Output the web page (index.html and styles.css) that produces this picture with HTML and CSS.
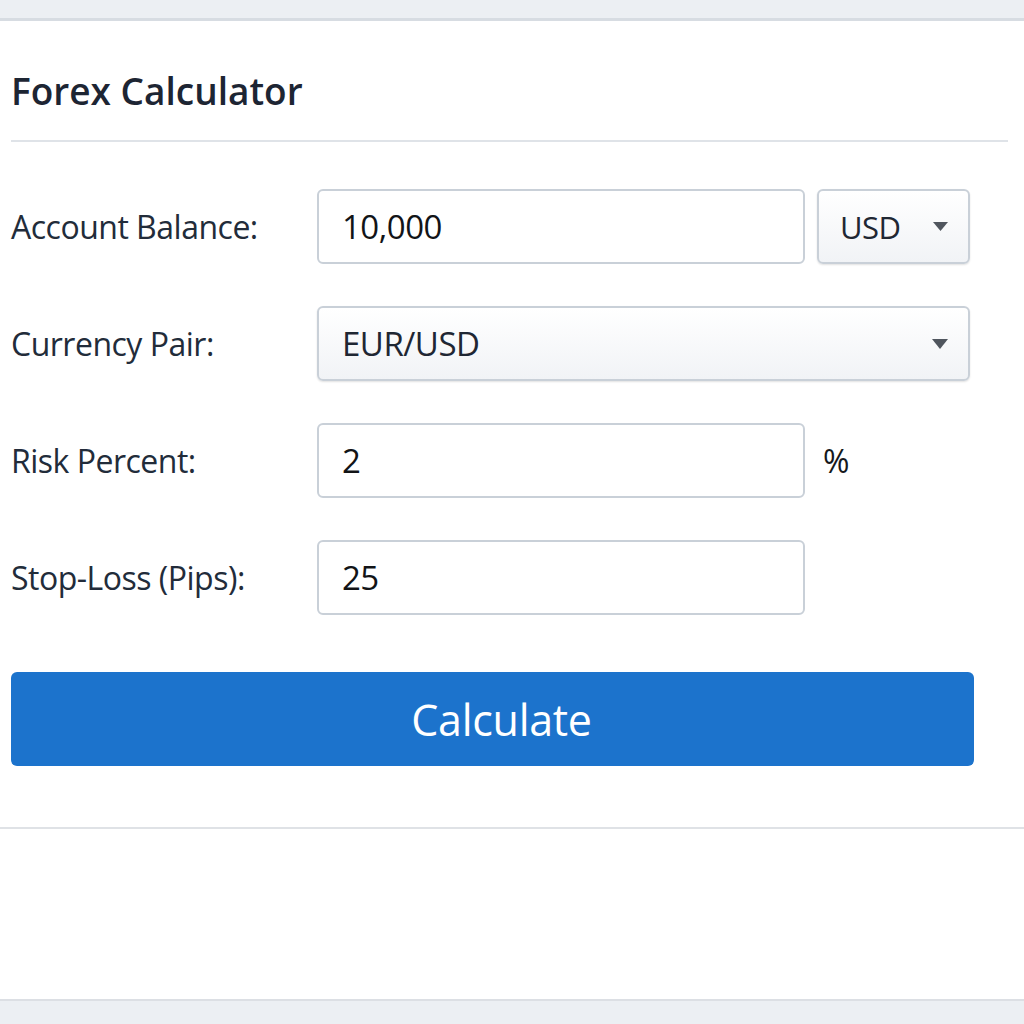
FILE: index.html
```html
<!DOCTYPE html>
<html lang="en">
<head>
  <meta charset="UTF-8" />
  <title>Forex Calculator</title>
  <link rel="stylesheet" href="styles.css">
</head>
<body>
  <div class="card">
    <div class="card-header">
      <h1>Forex Calculator</h1>
    </div>

    <form class="calc" onsubmit="return false">
      <div class="row">
        <label for="balance">Account Balance:</label>
        <input type="text" id="balance" value="10,000">
        <div class="select small">
          <select id="currency">
            <option>USD</option>
            <option>EUR</option>
            <option>GBP</option>
          </select>
          <svg class="arrow" width="15" height="9" viewBox="0 0 15 9"><path d="M0 0h15L7.5 9z" /></svg>
        </div>
      </div>

      <div class="row">
        <label for="pair">Currency Pair:</label>
        <div class="select wide">
          <select id="pair">
            <option>EUR/USD</option>
            <option>GBP/USD</option>
            <option>USD/JPY</option>
          </select>
          <svg class="arrow" width="16" height="10" viewBox="0 0 16 10"><path d="M0 0h16L8 10z" /></svg>
        </div>
      </div>

      <div class="row">
        <label for="risk">Risk Percent:</label>
        <input type="text" id="risk" value="2">
        <span class="unit">%</span>
      </div>

      <div class="row">
        <label for="stop">Stop-Loss (Pips):</label>
        <input type="text" id="stop" value="25">
      </div>

      <button type="submit">Calculate</button>
    </form>

    <div class="card-footer"></div>
  </div>
</body>
</html>
```

FILE: styles.css
```css
body {
  margin: 0;
  background: #eceff3;
  font-family: "Open Sans", Arial, sans-serif;
  color: #1f2a38;
}
.card {
  margin-top: 18px;
  height: 983px;
  background: #fff;
  border-top: 3px solid #d7dce2;
  border-bottom: 2px solid #dcdfe4;
  box-sizing: border-box;
  display: flex;
  flex-direction: column;
}
.card-header {
  margin: 0 16px 0 11px;
  padding-top: 48px;
  padding-bottom: 27px;
  border-bottom: 2px solid #dfe3e8;
}
h1 {
  margin: 0;
  font-size: 37px;
  line-height: 44px;
  font-weight: 600;
  color: #1d2533;
}
.calc {
  padding: 47px 0 61px 11px;
  display: flex;
  flex-direction: column;
  gap: 42px;
}
.row {
  display: grid;
  grid-template-columns: 294px 488px 153px;
  column-gap: 12px;
  align-items: center;
  height: 75px;
}
label {
  font-size: 32px;
  letter-spacing: -0.5px;
  color: #222c3a;
}
input[type="text"] {
  height: 75px;
  box-sizing: border-box;
  border: 2px solid #c9d0d8;
  border-radius: 6px;
  padding: 0 23px;
  font-family: "Open Sans", Arial, sans-serif;
  font-size: 33px;
  letter-spacing: -0.5px;
  color: #121417;
  background: #fff;
  outline: none;
}
.select {
  position: relative;
  height: 75px;
}
.select.wide {
  grid-column: 2 / 4;
}
.select select {
  appearance: none;
  width: 100%;
  height: 75px;
  box-sizing: border-box;
  border: 2px solid #c9d0d8;
  border-radius: 6px;
  background: linear-gradient(#ffffff, #f1f3f6);
  box-shadow: 0 1px 2px rgba(0, 0, 0, 0.12);
  font-family: "Open Sans", Arial, sans-serif;
  color: #1f2733;
  outline: none;
}
.select.small select {
  padding-left: 21px;
  font-size: 31px;
  letter-spacing: -0.5px;
}
.select.wide select {
  padding-left: 23px;
  font-size: 33px;
  font-weight: 500;
  letter-spacing: -0.5px;
}
.arrow {
  position: absolute;
  right: 22px;
  top: 33px;
  fill: #50565e;
  pointer-events: none;
}
.unit {
  padding-left: 6px;
  font-size: 32px;
  color: #15181c;
}
button {
  margin-top: 15px;
  width: 963px;
  height: 94px;
  padding-left: 24px;
  border: none;
  border-radius: 6px;
  background: #1c73cc;
  color: #fff;
  font-family: "Open Sans", Arial, sans-serif;
  font-size: 43px;
  font-weight: 500;
  letter-spacing: -0.3px;
  cursor: pointer;
}
.card-footer {
  flex: 1;
  border-top: 2px solid #dfe2e6;
}
```
